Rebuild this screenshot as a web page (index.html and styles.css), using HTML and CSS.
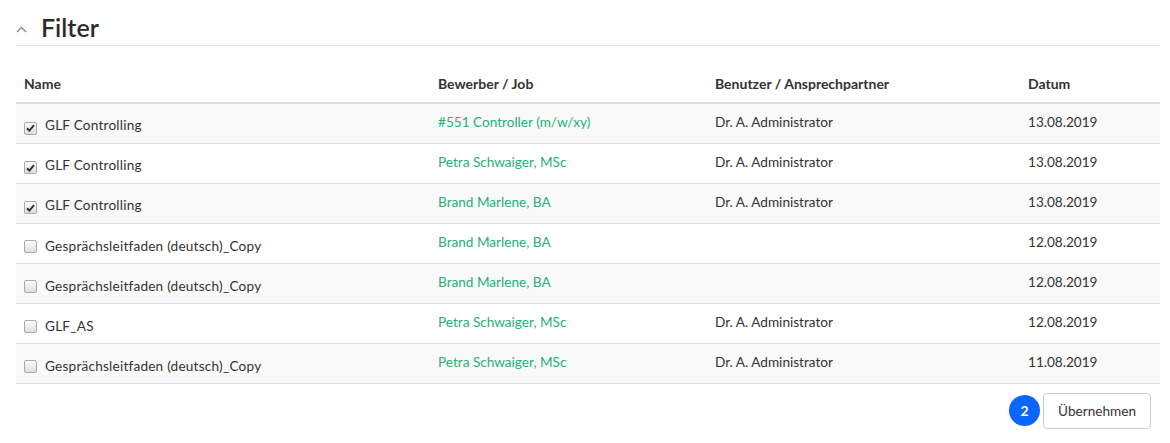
FILE: index.html
```html
<!DOCTYPE html>
<html lang="de">
<head>
<meta charset="utf-8">
<title>Filter</title>
<link rel="stylesheet" href="styles.css">
</head>
<body>
<div class="panel">
  <div class="panel-head">
    <svg class="chev" width="11" height="7" viewBox="0 0 11 7"><path d="M1 6 L5.5 1.5 L10 6" fill="none" stroke="#888" stroke-width="1.3"/></svg>
    <h2 class="title">Filter</h2>
  </div>
  <table class="grid">
    <thead>
      <tr><th class="c1">Name</th><th class="c2">Bewerber / Job</th><th class="c3">Benutzer / Ansprechpartner</th><th class="c4">Datum</th></tr>
    </thead>
    <tbody>
      <tr><td class="name"><span class="cb on"><svg width="9" height="8" viewBox="0 0 9 8"><path d="M1 4.2 L3.4 6.6 L8 1.2" fill="none" stroke="#333" stroke-width="2"/></svg></span>GLF Controlling</td><td><a class="lnk">#551 Controller (m/w/xy)</a></td><td>Dr. A. Administrator</td><td>13.08.2019</td></tr>
      <tr><td class="name"><span class="cb on"><svg width="9" height="8" viewBox="0 0 9 8"><path d="M1 4.2 L3.4 6.6 L8 1.2" fill="none" stroke="#333" stroke-width="2"/></svg></span>GLF Controlling</td><td><a class="lnk">Petra Schwaiger, MSc</a></td><td>Dr. A. Administrator</td><td>13.08.2019</td></tr>
      <tr><td class="name"><span class="cb on"><svg width="9" height="8" viewBox="0 0 9 8"><path d="M1 4.2 L3.4 6.6 L8 1.2" fill="none" stroke="#333" stroke-width="2"/></svg></span>GLF Controlling</td><td><a class="lnk">Brand Marlene, BA</a></td><td>Dr. A. Administrator</td><td>13.08.2019</td></tr>
      <tr><td class="name"><span class="cb"></span>Gesprächsleitfaden (deutsch)_Copy</td><td><a class="lnk">Brand Marlene, BA</a></td><td></td><td>12.08.2019</td></tr>
      <tr><td class="name"><span class="cb"></span>Gesprächsleitfaden (deutsch)_Copy</td><td><a class="lnk">Brand Marlene, BA</a></td><td></td><td>12.08.2019</td></tr>
      <tr><td class="name"><span class="cb"></span>GLF_AS</td><td><a class="lnk">Petra Schwaiger, MSc</a></td><td>Dr. A. Administrator</td><td>12.08.2019</td></tr>
      <tr><td class="name"><span class="cb"></span>Gesprächsleitfaden (deutsch)_Copy</td><td><a class="lnk">Petra Schwaiger, MSc</a></td><td>Dr. A. Administrator</td><td>11.08.2019</td></tr>
    </tbody>
  </table>
  <div class="actions">
    <span class="badge">2</span>
    <button class="btn" type="button">Übernehmen</button>
  </div>
</div>
</body>
</html>
```
FILE: styles.css
```css
* { box-sizing: border-box; }
html, body { margin: 0; padding: 0; background: #fff; }
body {
  font-family: Lato, "Open Sans", sans-serif;
  font-size: 13.6px;
  color: #333;
}
.panel {
  padding: 9px 10px 0 16px;
}
.panel-head {
  display: flex;
  align-items: center;
  height: 37px;
  border-bottom: 1px solid #e5e5e5;
}
.chev {
  margin: 4px 14px 0 0;
}
.title {
  margin: 0;
  font-size: 25px;
  font-weight: 600;
  color: #2b2b2b;
  line-height: 36px;
}
.grid {
  width: 1144px;
  border-collapse: collapse;
  margin-top: 21px;
}
.grid th {
  text-align: left;
  font-weight: 700;
  font-size: 14px;
  padding: 8px 8px 10px;
  border-bottom: 2px solid #ddd;
  height: 36px;
  color: #333;
}
.c1 { width: 414px; }
.c2 { width: 277px; }
.c3 { width: 313px; }
.grid td {
  padding: 0 8px 2px;
  height: 40px;
  border-bottom: 1px solid #ddd;
  vertical-align: middle;
}
.grid tbody tr:nth-child(odd) td { background: #f9f9f9; }
.grid td.name { padding-top: 5px; padding-bottom: 0; }
.name { letter-spacing: 0.22px; }
.cb {
  display: inline-flex;
  align-items: center;
  justify-content: center;
  width: 13px;
  height: 13px;
  border: 1px solid #a9a9a9;
  border-radius: 2px;
  background: linear-gradient(#fcfcfc, #dedede);
  vertical-align: -2px;
  margin-right: 8px;
}
.lnk { color: #27b074; text-decoration: none; }
.actions {
  display: flex;
  justify-content: flex-end;
  align-items: center;
  gap: 3px;
  padding: 9px 9px 0 0;
}
.badge {
  width: 31px;
  height: 31px;
  border-radius: 50%;
  background: #0a66ff;
  color: #fff;
  font-weight: 700;
  font-size: 14px;
  display: flex;
  align-items: center;
  justify-content: center;
}
.btn {
  font-family: inherit;
  font-size: 13.6px;
  color: #333;
  background: #fff;
  border: 1px solid #ccc;
  border-radius: 4px;
  height: 36px;
  padding: 0 14px;
}
```
